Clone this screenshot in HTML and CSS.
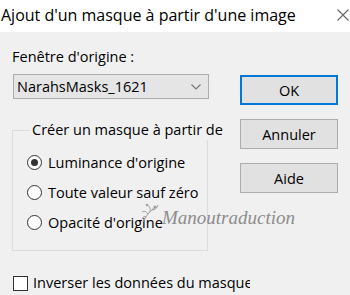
FILE: index.html
```html
<!DOCTYPE html>
<html lang="fr">
<head>
<meta charset="utf-8">
<link rel="stylesheet" href="styles.css">
</head>
<body>
<div class="window">
  <div class="titlebar">
    <span class="title">Ajout d'un masque à partir d'une image</span>
    <svg class="close" width="12" height="12" viewBox="0 0 12 12"><path d="M0.5 0.5 L11.5 11.5 M11.5 0.5 L0.5 11.5" stroke="#666" stroke-width="1.1" fill="none"/></svg>
  </div>
  <div class="content">
    <div class="main">
      <div class="left">
        <div class="label">Fenêtre d'origine :</div>
        <div class="combo">
          <span>NarahsMasks_1621</span>
          <svg class="chev" width="10" height="6" viewBox="0 0 10 6"><path d="M0.5 0.5 L5 5 L9.5 0.5" stroke="#777" stroke-width="1.2" fill="none"/></svg>
        </div>
        <fieldset class="group">
          <legend>Créer un masque à partir de</legend>
          <div class="radio"><span class="dot checked"></span>Luminance d'origine</div>
          <div class="radio"><span class="dot"></span>Toute valeur sauf zéro</div>
          <div class="radio"><span class="dot"></span>Opacité d'origine</div>
        </fieldset>
      </div>
      <div class="buttons">
        <div class="btn default">OK</div>
        <div class="btn">Annuler</div>
        <div class="btn">Aide</div>
      </div>
    </div>
    <div class="check"><span class="box"></span>Inverser les données du masque</div>
    <div class="watermark">
      <svg class="orn" width="22" height="22" viewBox="0 0 22 22"><path d="M3 20 C6 14 9 10 14 6 M8 12 C6 9 4 9 2 10 M10 10 C11 6 9 4 7 3 M12 8 C15 8 17 6 18 3 M6 15 C4 14 3 15 2 17" stroke="#9a9a9a" stroke-width="1" fill="none"/><circle cx="15" cy="5" r="1.6" fill="#a0a0a0"/><circle cx="7" cy="3" r="1.3" fill="#a0a0a0"/></svg>
      <span>Manoutraduction</span>
    </div>
  </div>
</div>
</body>
</html>
```

FILE: styles.css
```css
html, body {
  margin: 0;
  padding: 0;
}
body {
  width: 350px;
  height: 295px;
  overflow: hidden;
  font-family: "Open Sans", "Noto Sans", sans-serif;
  font-size: 14.5px;
  color: #000;
}
.window {
  width: 350px;
  height: 295px;
  background: #f0f0f0;
}
.titlebar {
  height: 32px;
  background: #fff;
  display: flex;
  align-items: center;
  justify-content: space-between;
  padding: 0 1px 0 1px;
}
.title {
  font-size: 16px;
  line-height: 20px;
  margin-top: -2px;
}
.close {
  margin-top: -2px;
}
.content {
  position: relative;
  height: 263px;
  padding: 0 12px;
}
.main {
  display: flex;
}
.left {
  width: 197px;
}
.label {
  margin-top: 15px;
  line-height: 20px;
}
.combo {
  margin-top: 7px;
  margin-left: 1px;
  height: 25px;
  box-sizing: border-box;
  border: 1px solid #adadad;
  background: #e5e5e5;
  display: flex;
  align-items: center;
  justify-content: space-between;
  padding: 0 7px 0 3px;
}
.group {
  margin: 21px 0 0 0;
  width: 196px;
  height: 131px;
  box-sizing: border-box;
  border: 1px solid #dcdcdc;
  padding: 7px 0 0 14px;
  min-width: 0;
}
.group legend {
  padding: 0 2px;
  margin-left: 3px;
  line-height: 20px;
  white-space: nowrap;
}
.radio {
  display: flex;
  align-items: center;
  height: 30px;
}
.dot {
  width: 15px;
  height: 15px;
  box-sizing: border-box;
  border: 1px solid #333;
  border-radius: 50%;
  background: #fff;
  margin-right: 6px;
  display: flex;
  align-items: center;
  justify-content: center;
}
.dot.checked::after {
  content: "";
  width: 7px;
  height: 7px;
  border-radius: 50%;
  background: #333;
}
.buttons {
  margin-left: 31px;
  margin-top: 43px;
  display: flex;
  flex-direction: column;
  gap: 14px;
}
.btn {
  width: 98px;
  height: 30px;
  box-sizing: border-box;
  border: 1px solid #adadad;
  background: #e1e1e1;
  display: flex;
  align-items: center;
  justify-content: center;
}
.btn.default {
  border: 2px solid #0078d7;
}
.check {
  margin-top: 22px;
  margin-left: 1px;
  width: 237px;
  display: flex;
  align-items: center;
  white-space: nowrap;
  overflow: hidden;
  line-height: 20px;
}
.box {
  flex: none;
  width: 15px;
  height: 15px;
  box-sizing: border-box;
  border: 1px solid #333;
  background: #fff;
  margin-right: 5px;
}
.watermark {
  position: absolute;
  left: 140px;
  top: 170px;
  display: flex;
  align-items: flex-end;
  color: #8c8c8c;
  font-family: "Liberation Serif", serif;
  font-style: italic;
  font-size: 19px;
  line-height: 24px;
}
.orn {
  margin-bottom: 6px;
}
```
